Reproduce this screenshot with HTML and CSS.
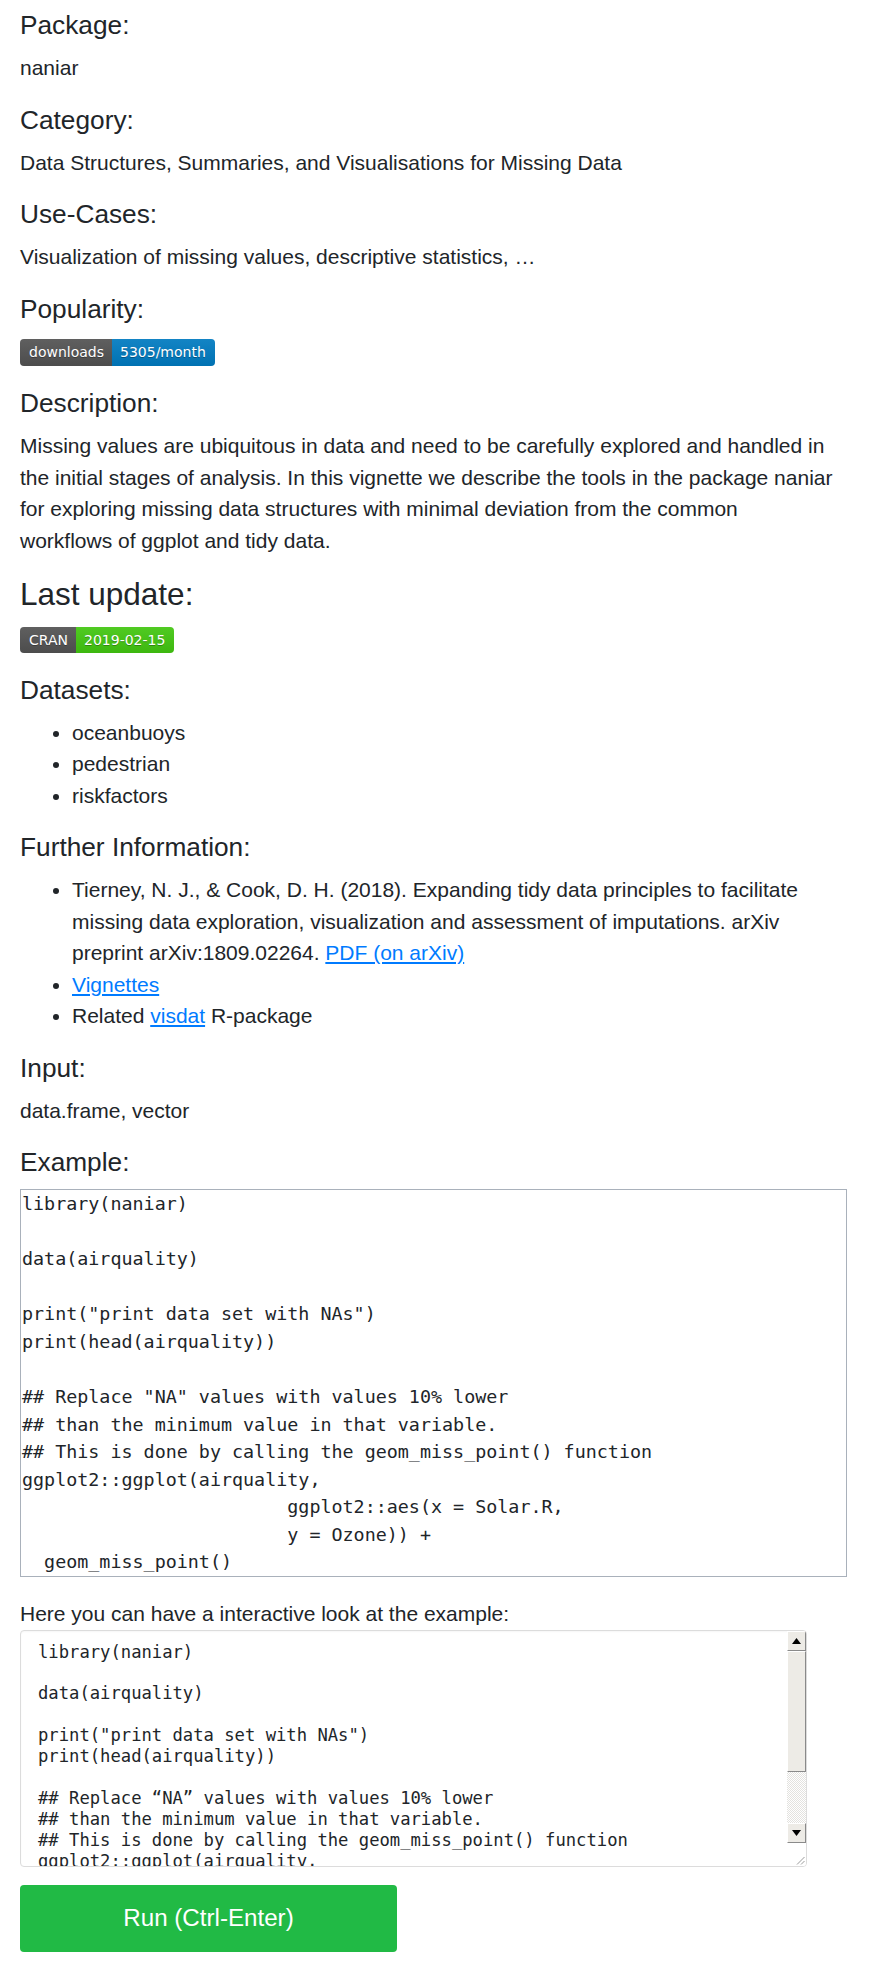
FILE: index.html
```html
<!DOCTYPE html>
<html lang="en">
<head>
<meta charset="utf-8">
<title>naniar</title>
<link rel="stylesheet" href="styles.css">
</head>
<body>
<main class="page">
  <h5 class="label">Package:</h5>
  <p class="value">naniar</p>

  <h5 class="label">Category:</h5>
  <p class="value">Data Structures, Summaries, and Visualisations for Missing Data</p>

  <h5 class="label">Use-Cases:</h5>
  <p class="value">Visualization of missing values, descriptive statistics, …</p>

  <h5 class="label">Popularity:</h5>
  <p class="value"><span class="badge"><span class="badge-key">downloads</span><span class="badge-val blue">5305/month</span></span></p>

  <h5 class="label">Description:</h5>
  <p class="value">Missing values are ubiquitous in data and need to be carefully explored and handled in the initial stages of analysis. In this vignette we describe the tools in the package naniar for exploring missing data structures with minimal deviation from the common workflows of ggplot and tidy data.</p>

  <h4 class="label-lg">Last update:</h4>
  <p class="value"><span class="badge small"><span class="badge-key">CRAN</span><span class="badge-val green">2019-02-15</span></span></p>

  <h5 class="label">Datasets:</h5>
  <ul class="list">
    <li>oceanbuoys</li>
    <li>pedestrian</li>
    <li>riskfactors</li>
  </ul>

  <h5 class="label">Further Information:</h5>
  <ul class="list">
    <li>Tierney, N. J., &amp; Cook, D. H. (2018). Expanding tidy data principles to facilitate missing data exploration, visualization and assessment of imputations. arXiv preprint arXiv:1809.02264. <a href="#">PDF (on arXiv)</a></li>
    <li><a href="#">Vignettes</a></li>
    <li>Related <a href="#">visdat</a> R-package</li>
  </ul>

  <h5 class="label">Input:</h5>
  <p class="value">data.frame, vector</p>

  <h5 class="label">Example:</h5>
  <pre class="code-static">library(naniar)

data(airquality)

print("print data set with NAs")
print(head(airquality))

## Replace "NA" values with values 10% lower
## than the minimum value in that variable.
## This is done by calling the geom_miss_point() function
ggplot2::ggplot(airquality,
                        ggplot2::aes(x = Solar.R,
                        y = Ozone)) +
  geom_miss_point()</pre>

  <p class="intro">Here you can have a interactive look at the example:</p>
  <div class="editor">
    <pre class="editor-text">library(naniar)

data(airquality)

print("print data set with NAs")
print(head(airquality))

## Replace “NA” values with values 10% lower
## than the minimum value in that variable.
## This is done by calling the geom_miss_point() function
ggplot2::ggplot(airquality,
                ggplot2::aes(x = Solar.R,
                y = Ozone)) +
  geom_miss_point()</pre>
    <div class="scrollbar">
      <div class="sb-btn"><svg width="9" height="6" viewBox="0 0 9 6"><polygon points="4.5,0 9,6 0,6" fill="#000"/></svg></div>
      <div class="sb-thumb"></div>
      <div class="sb-track"></div>
      <div class="sb-btn"><svg width="9" height="6" viewBox="0 0 9 6"><polygon points="0,0 9,0 4.5,6" fill="#000"/></svg></div>
      <div class="sb-corner"><svg width="9" height="9" viewBox="0 0 9 9"><line x1="8.5" y1="1" x2="1" y2="8.5" stroke="#9a9a9a" stroke-width="1"/><line x1="8.5" y1="5" x2="5" y2="8.5" stroke="#9a9a9a" stroke-width="1"/></svg></div>
    </div>
  </div>
  <button class="run-btn" type="button">Run (Ctrl-Enter)</button>
</main>
</body>
</html>
```

FILE: styles.css
```css
html, body {
  margin: 0;
  padding: 0;
  background: #ffffff;
}

body {
  font-family: "Liberation Sans", Arial, Helvetica, sans-serif;
  font-size: 21px;
  line-height: 1.5;
  color: #212529;
}

.page {
  padding: 10px 26px 0 20px;
}

.label {
  font-size: 26.25px;
  font-weight: 400;
  line-height: 1.2;
  margin: 0 0 10.5px;
}

.label-lg {
  font-size: 31.5px;
  font-weight: 400;
  line-height: 1.1;
  margin: 0 0 10.5px;
}

.value {
  margin: 0 0 21px;
  max-width: 814px;
}

.list {
  margin: 0 0 21px;
  padding-left: 52px;
  max-width: 766px;
}

.list a,
.value a {
  color: #007bff;
  text-decoration: underline;
}

a {
  color: #007bff;
}

/* shields-style badges */
.badge {
  display: inline-flex;
  vertical-align: middle;
  height: 27px;
  border-radius: 4px;
  overflow: hidden;
  font-family: "DejaVu Sans", Verdana, sans-serif;
  font-size: 14px;
  line-height: 27px;
  color: #fff;
  text-shadow: 0 1px 0 rgba(1, 1, 1, 0.3);
}

.badge.small {
  height: 26px;
  line-height: 26px;
}

.badge-key,
.badge-val {
  display: block;
  background-image: linear-gradient(rgba(187, 187, 187, 0.1), rgba(0, 0, 0, 0.1));
}

.badge-key {
  background-color: #555;
  padding: 0 8px 0 9px;
}

.badge-val {
  padding: 0 9px 0 8px;
}

.badge-val.blue {
  background-color: #007ec6;
}

.badge-val.green {
  background-color: #4c1;
}

/* static example box */
.code-static {
  width: 824px;
  margin: 0 0 21px;
  padding: 0 0 0 1px;
  border: 1px solid #a9b1bb;
  font-family: "DejaVu Sans Mono", "Liberation Mono", monospace;
  font-size: 18.375px;
  line-height: 1.5;
  color: #212529;
  white-space: pre;
  overflow: hidden;
  box-sizing: content-box;
}

.intro {
  margin: 0;
}

/* interactive editor */
.editor {
  display: flex;
  width: 787px;
  height: 237px;
  box-sizing: border-box;
  border: 1px solid #dcdcdc;
  border-radius: 4px;
  overflow: hidden;
  background: #fff;
  box-shadow: inset 0 1px 2px rgba(0, 0, 0, 0.04);
}

.editor-text {
  flex: 1;
  margin: 0;
  padding: 11px 0 0 17px;
  font-family: "DejaVu Sans Mono", "Liberation Mono", monospace;
  font-size: 17.2px;
  line-height: 20.9px;
  color: #212529;
  white-space: pre;
  overflow: hidden;
}

.scrollbar {
  width: 19px;
  display: flex;
  flex-direction: column;
  flex-shrink: 0;
}

.sb-btn {
  height: 20px;
  box-sizing: border-box;
  background: #edebe6;
  border-top: 1px solid #ffffff;
  border-left: 1px solid #ffffff;
  border-right: 1px solid #8a8a8a;
  border-bottom: 1px solid #8a8a8a;
  display: flex;
  align-items: center;
  justify-content: center;
}

.sb-thumb {
  height: 121px;
  box-sizing: border-box;
  background: #edebe6;
  border-top: 1px solid #ffffff;
  border-left: 1px solid #ffffff;
  border-right: 1px solid #8a8a8a;
  border-bottom: 1px solid #8a8a8a;
}

.sb-track {
  flex: 1;
  background-color: #ffffff;
  background-image: repeating-conic-gradient(#e3e2df 0 25%, #ffffff 0 50%);
  background-size: 2px 2px;
}

.sb-corner {
  height: 22px;
  background: #ffffff;
  display: flex;
  align-items: flex-end;
  justify-content: flex-end;
  padding: 0 1px 1px 0;
}

.run-btn {
  display: block;
  margin: 18px 0 0;
  width: 377px;
  height: 67px;
  border: 0;
  border-radius: 4px;
  background: #21ba45;
  color: #ffffff;
  font-family: "Liberation Sans", Arial, Helvetica, sans-serif;
  font-size: 24.15px;
  font-weight: 400;
  cursor: pointer;
}
```
